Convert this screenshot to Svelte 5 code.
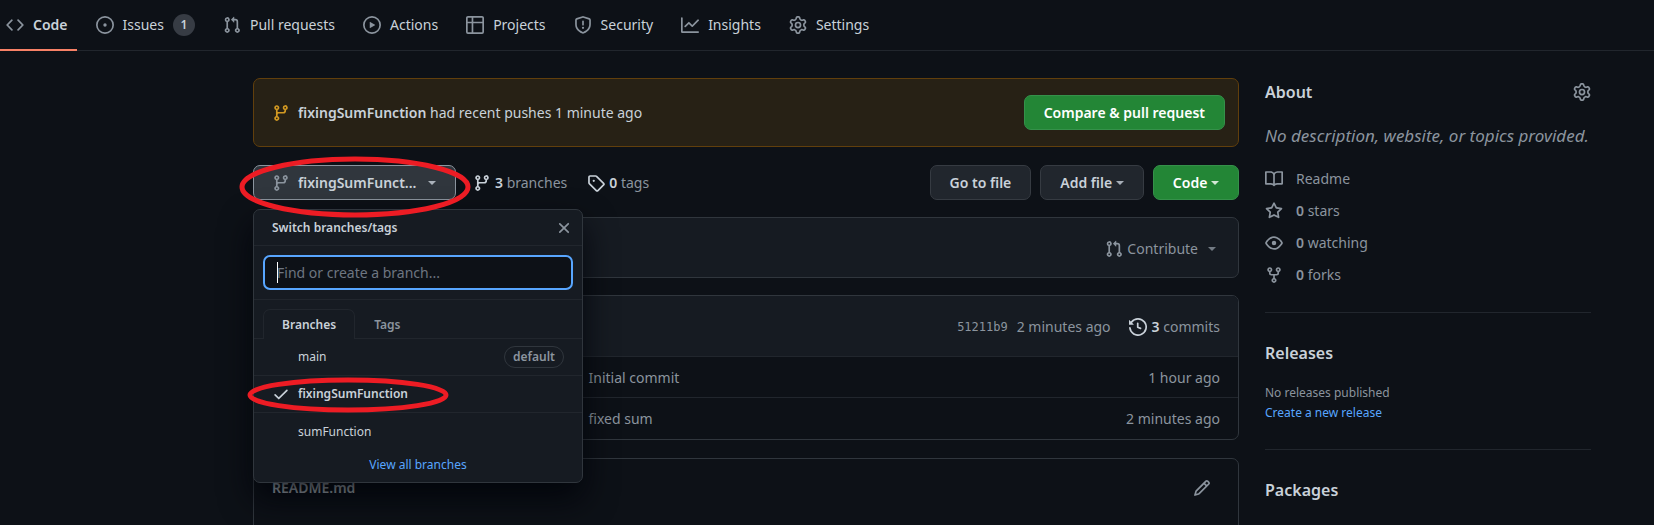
<script>
  const icons = {
    code: 'M4.72 3.22a.75.75 0 011.06 1.06L2.06 8l3.72 3.72a.75.75 0 11-1.06 1.06L.47 8.53a.75.75 0 010-1.06l4.25-4.25zm6.56 0a.75.75 0 10-1.06 1.06L13.94 8l-3.72 3.72a.75.75 0 101.06 1.06l4.25-4.25a.75.75 0 000-1.06l-4.25-4.25z',
    issue: 'M8 9.5a1.5 1.5 0 100-3 1.5 1.5 0 000 3zM8 0a8 8 0 100 16A8 8 0 008 0zM1.5 8a6.5 6.5 0 1113 0 6.5 6.5 0 01-13 0z',
    pull: 'M7.177 3.073L9.573.677A.25.25 0 0110 .854v4.792a.25.25 0 01-.427.177L7.177 3.427a.25.25 0 010-.354zM3.75 2.5a.75.75 0 100 1.5.75.75 0 000-1.5zm-2.25.75a2.25 2.25 0 113 2.122v5.256a2.251 2.251 0 11-1.5 0V5.372A2.25 2.25 0 011.5 3.25zM11 2.5h-1V4h1a1 1 0 011 1v5.628a2.251 2.251 0 101.5 0V5A2.5 2.5 0 0011 2.5zm1 10.25a.75.75 0 111.5 0 .75.75 0 01-1.5 0zM3.75 12a.75.75 0 100 1.5.75.75 0 000-1.5z',
    play: 'M1.5 8a6.5 6.5 0 1113 0 6.5 6.5 0 01-13 0zM8 0a8 8 0 100 16A8 8 0 008 0zM6.379 5.227A.25.25 0 006 5.442v5.117a.25.25 0 00.379.214l4.264-2.559a.25.25 0 000-.428L6.379 5.227z',
    table: 'M0 1.75C0 .784.784 0 1.75 0h12.5C15.216 0 16 .784 16 1.75v12.5A1.75 1.75 0 0114.25 16H1.75A1.75 1.75 0 010 14.25V1.75zM1.5 6.5v7.75c0 .138.112.25.25.25H5v-8H1.5zM5 5H1.5V1.75a.25.25 0 01.25-.25H5V5zm1.5 1.5v8h7.75a.25.25 0 00.25-.25V6.5h-8zm8-1.5h-8V1.5h7.75a.25.25 0 01.25.25V5z',
    shield: 'M7.467.133a1.75 1.75 0 011.066 0l5.25 1.68A1.75 1.75 0 0115 3.48V7c0 1.566-.32 3.182-1.303 4.682-.983 1.498-2.585 2.813-5.032 3.855a1.7 1.7 0 01-1.33 0c-2.447-1.042-4.049-2.357-5.032-3.855C1.32 10.182 1 8.566 1 7V3.48a1.75 1.75 0 011.217-1.667l5.25-1.68zm.61 1.429a.25.25 0 00-.153 0l-5.25 1.68a.25.25 0 00-.174.238V7c0 1.358.275 2.666 1.057 3.86.784 1.194 2.121 2.34 4.366 3.297a.2.2 0 00.154 0c2.245-.956 3.582-2.104 4.366-3.298C13.225 9.666 13.5 8.36 13.5 7V3.48a.25.25 0 00-.174-.237l-5.25-1.68zM8.75 4.75a.75.75 0 00-1.5 0v3a.75.75 0 001.5 0v-3zM9 10.5a1 1 0 11-2 0 1 1 0 012 0z',
    graph: 'M1.5 1.75a.75.75 0 00-1.5 0v12.5c0 .414.336.75.75.75h14.5a.75.75 0 000-1.5H1.5V1.75zm14.28 2.53a.75.75 0 00-1.06-1.06L10 7.94 7.53 5.47a.75.75 0 00-1.06 0L3.22 8.72a.75.75 0 001.06 1.06L7 7.06l2.47 2.47a.75.75 0 001.06 0l5.25-5.25z',
    gear: 'M7.429 1.525a6.593 6.593 0 011.142 0c.036.003.108.036.137.146l.289 1.105c.147.56.55.967.997 1.189.174.086.341.183.501.29.417.278.97.423 1.53.27l1.102-.303c.11-.03.175.016.195.046.219.31.41.641.573.989.014.031.022.11-.059.19l-.815.806c-.411.406-.562.957-.53 1.456a4.588 4.588 0 010 .582c-.032.499.119 1.05.53 1.456l.815.806c.08.08.073.159.059.19a6.494 6.494 0 01-.573.99c-.02.029-.086.074-.195.045l-1.103-.303c-.559-.153-1.112-.008-1.529.27-.16.107-.327.204-.5.29-.449.222-.851.628-.998 1.189l-.289 1.105c-.029.11-.101.143-.137.146a6.613 6.613 0 01-1.142 0c-.036-.003-.108-.037-.137-.146l-.289-1.105c-.147-.56-.55-.967-.997-1.189a4.502 4.502 0 01-.501-.29c-.417-.278-.97-.423-1.53-.27l-1.102.303c-.11.03-.175-.016-.195-.046a6.492 6.492 0 01-.573-.989c-.014-.031-.022-.11.059-.19l.815-.806c.411-.406.562-.957.53-1.456a4.587 4.587 0 010-.582c.032-.499-.119-1.05-.53-1.456l-.815-.806c-.08-.08-.073-.159-.059-.19a6.44 6.44 0 01.573-.99c.02-.029.086-.075.195-.045l1.103.303c.559.153 1.112.008 1.529-.27.16-.107.327-.204.5-.29.449-.222.851-.628.998-1.189l.289-1.105c.029-.11.101-.143.137-.146zM8 0c-.236 0-.47.01-.701.03-.743.065-1.29.615-1.458 1.261l-.29 1.106c-.017.066-.078.158-.211.224a5.994 5.994 0 00-.668.386c-.123.082-.233.09-.3.071L3.27 2.776c-.644-.177-1.392.02-1.82.63a7.977 7.977 0 00-.704 1.217c-.315.675-.111 1.422.363 1.891l.815.806c.05.048.098.147.088.294a6.084 6.084 0 000 .772c.01.147-.038.246-.088.294l-.815.806c-.474.469-.678 1.216-.363 1.891.2.428.436.835.704 1.218.428.609 1.176.806 1.82.63l1.103-.303c.066-.019.176-.011.299.071.213.143.436.272.668.386.133.066.194.158.212.224l.289 1.106c.169.646.715 1.196 1.458 1.26a8.094 8.094 0 001.402 0c.743-.064 1.29-.614 1.458-1.26l.29-1.106c.017-.066.078-.158.211-.224a5.98 5.98 0 00.668-.386c.123-.082.233-.09.3-.071l1.102.302c.644.177 1.392-.02 1.82-.63.268-.382.505-.789.704-1.217.315-.675.111-1.422-.364-1.891l-.814-.806c-.05-.048-.098-.147-.088-.294a6.1 6.1 0 000-.772c-.01-.147.039-.246.088-.294l.814-.806c.475-.469.679-1.216.364-1.891a7.992 7.992 0 00-.704-1.218c-.428-.609-1.176-.806-1.82-.63l-1.103.303c-.066.019-.176.011-.299-.071a5.991 5.991 0 00-.668-.386c-.133-.066-.194-.158-.212-.224L10.16 1.29C9.99.645 9.444.095 8.701.031A8.094 8.094 0 008 0zm1.5 8a1.5 1.5 0 11-3 0 1.5 1.5 0 013 0zM11 8a3 3 0 11-6 0 3 3 0 016 0z',
    branch: 'M11.75 2.5a.75.75 0 100 1.5.75.75 0 000-1.5zm-2.25.75a2.25 2.25 0 113 2.122V6A2.5 2.5 0 0110 8.5H6a1 1 0 00-1 1v1.128a2.251 2.251 0 11-1.5 0V5.372a2.25 2.25 0 111.5 0v1.836A2.492 2.492 0 016 7h4a1 1 0 001-1v-.628A2.25 2.25 0 019.5 3.25zM4.25 12a.75.75 0 100 1.5.75.75 0 000-1.5zM3.5 3.25a.75.75 0 111.5 0 .75.75 0 01-1.5 0z',
    tag: 'M2.5 7.775V2.75a.25.25 0 01.25-.25h5.025a.25.25 0 01.177.073l6.25 6.25a.25.25 0 010 .354l-5.025 5.025a.25.25 0 01-.354 0l-6.25-6.25a.25.25 0 01-.073-.177zm-1.5 0V2.75C1 1.784 1.784 1 2.75 1h5.025c.464 0 .91.184 1.238.513l6.25 6.25a1.75 1.75 0 010 2.474l-5.026 5.026a1.75 1.75 0 01-2.474 0l-6.25-6.25A1.75 1.75 0 011 7.775zM6 5a1 1 0 100 2 1 1 0 000-2z',
    history: 'M1.643 3.143L.427 1.927A.25.25 0 000 2.104V5.75c0 .138.112.25.25.25h3.646a.25.25 0 00.177-.427L2.715 4.215a6.5 6.5 0 11-1.18 4.458.75.75 0 10-1.493.154 8.001 8.001 0 101.6-5.684zM7.75 4a.75.75 0 01.75.75v2.992l2.028.812a.75.75 0 01-.557 1.392l-2.5-1A.75.75 0 017 8.25v-3.5A.75.75 0 017.75 4z',
    pencil: 'M11.013 1.427a1.75 1.75 0 012.474 0l1.086 1.086a1.75 1.75 0 010 2.474l-8.61 8.61c-.21.21-.47.364-.756.445l-3.251.93a.75.75 0 01-.927-.928l.929-3.25a1.75 1.75 0 01.445-.758l8.61-8.61zm1.414 1.06a.25.25 0 00-.354 0L10.811 3.75l1.439 1.44 1.263-1.263a.25.25 0 000-.354l-1.086-1.086zM11.189 6.25L9.75 4.81l-6.286 6.287a.25.25 0 00-.064.108l-.558 1.953 1.953-.558a.249.249 0 00.108-.064l6.286-6.286z',
    close: 'M3.72 3.72a.75.75 0 011.06 0L8 6.94l3.22-3.22a.75.75 0 111.06 1.06L9.06 8l3.22 3.22a.75.75 0 11-1.06 1.06L8 9.06l-3.22 3.22a.75.75 0 01-1.06-1.06L6.94 8 3.72 4.78a.75.75 0 010-1.06z',
    check: 'M13.78 4.22a.75.75 0 010 1.06l-7.25 7.25a.75.75 0 01-1.06 0L2.22 9.28a.75.75 0 011.06-1.06L6 10.94l6.72-6.72a.75.75 0 011.06 0z',
    book: 'M0 1.75A.75.75 0 01.75 1h4.253c1.227 0 2.317.59 3 1.501A3.744 3.744 0 0111.006 1h4.245a.75.75 0 01.75.75v10.5a.75.75 0 01-.75.75h-4.507a2.25 2.25 0 00-1.591.659l-.622.621a.75.75 0 01-1.06 0l-.622-.621A2.25 2.25 0 005.258 13H.75a.75.75 0 01-.75-.75V1.75zm8.755 3a2.25 2.25 0 012.25-2.25H14.5v9h-3.757c-.71 0-1.4.201-1.992.572l.004-7.322zm-1.504 7.324l.004-5.073-.002-2.253A2.25 2.25 0 005.003 2.5H1.5v9h3.757a3.75 3.75 0 011.994.574z',
    star: 'M8 .25a.75.75 0 01.673.418l1.882 3.815 4.21.612a.75.75 0 01.416 1.279l-3.046 2.97.719 4.192a.75.75 0 01-1.088.791L8 12.347l-3.766 1.98a.75.75 0 01-1.088-.79l.72-4.194L.818 6.374a.75.75 0 01.416-1.28l4.21-.611L7.327.668A.75.75 0 018 .25zm0 2.445L6.615 5.5a.75.75 0 01-.564.41l-3.097.45 2.24 2.184a.75.75 0 01.216.664l-.528 3.084 2.769-1.456a.75.75 0 01.698 0l2.77 1.456-.53-3.084a.75.75 0 01.216-.664l2.24-2.183-3.096-.45a.75.75 0 01-.564-.41L8 2.694v.001z',
    eye: 'M1.679 7.932c.412-.621 1.242-1.75 2.366-2.717C5.175 4.242 6.527 3.5 8 3.5c1.473 0 2.824.742 3.955 1.715 1.124.967 1.954 2.096 2.366 2.717a.119.119 0 010 .136c-.412.621-1.242 1.75-2.366 2.717C10.825 11.758 9.473 12.5 8 12.5c-1.473 0-2.824-.742-3.955-1.715C2.92 9.818 2.09 8.69 1.679 8.068a.119.119 0 010-.136zM8 2c-1.981 0-3.67.992-4.933 2.078C1.797 5.169.88 6.423.43 7.1a1.619 1.619 0 000 1.798c.45.678 1.367 1.932 2.637 3.024C4.329 13.008 6.019 14 8 14c1.981 0 3.67-.992 4.933-2.078 1.27-1.091 2.187-2.345 2.637-3.023a1.619 1.619 0 000-1.798c-.45-.678-1.367-1.932-2.637-3.023C11.671 2.992 9.981 2 8 2zm0 8a2 2 0 100-4 2 2 0 000 4z',
    fork: 'M5 3.25a.75.75 0 11-1.5 0 .75.75 0 011.5 0zm0 2.122a2.25 2.25 0 10-1.5 0v.878A2.25 2.25 0 005.75 8.5h1.5v2.128a2.251 2.251 0 101.5 0V8.5h1.5a2.25 2.25 0 002.25-2.25v-.878a2.25 2.25 0 10-1.5 0v.878a.75.75 0 01-.75.75h-4.5A.75.75 0 015 6.25v-.878zm3.75 7.378a.75.75 0 11-1.5 0 .75.75 0 011.5 0zm3-8.75a.75.75 0 100-1.5.75.75 0 000 1.5z'
  };

  const tabs = [
    { label: 'Code', icon: 'code', active: true },
    { label: 'Issues', icon: 'issue', count: 1 },
    { label: 'Pull requests', icon: 'pull' },
    { label: 'Actions', icon: 'play' },
    { label: 'Projects', icon: 'table' },
    { label: 'Security', icon: 'shield' },
    { label: 'Insights', icon: 'graph' },
    { label: 'Settings', icon: 'gear' }
  ];

  const branches = [
    { name: 'main', isDefault: true },
    { name: 'fixingSumFunction' },
    { name: 'sumFunction' }
  ];

  const files = [
    { message: 'Initial commit', age: '1 hour ago' },
    { message: 'fixed sum', age: '2 minutes ago' }
  ];

  const stats = [
    { icon: 'star', count: 0, label: 'stars' },
    { icon: 'eye', count: 0, label: 'watching' },
    { icon: 'fork', count: 0, label: 'forks' }
  ];

  let current = $state('fixingSumFunction');
  let query = $state('');
</script>

{#snippet icon(name)}
  <svg class="icon" viewBox="0 0 16 16" width="18" height="18" aria-hidden="true">
    <path fill-rule="evenodd" d={icons[name]} />
  </svg>
{/snippet}

<nav class="tabs">
  {#each tabs as tab}
    <a href="#{tab.icon}" class="tab" class:active={tab.active}>
      {@render icon(tab.icon)}
      <span>{tab.label}</span>
      {#if tab.count}<span class="counter">{tab.count}</span>{/if}
    </a>
  {/each}
</nav>

<div class="layout">
  <main>
    <div class="flash">
      {@render icon('branch')}
      <p><strong>fixingSumFunction</strong> had recent pushes 1 minute ago</p>
      <button class="btn primary">Compare &amp; pull request</button>
    </div>

    <div class="toolbar">
      <div class="picker">
        <button class="btn branch-btn">
          {@render icon('branch')}
          <span>fixingSumFunct...</span>
          <i class="caret"></i>
        </button>

        <div class="menu">
          <header>
            <strong>Switch branches/tags</strong>
            <button class="plain" aria-label="Close">{@render icon('close')}</button>
          </header>
          <div class="filter">
            <input type="text" aria-label="Find or create a branch" placeholder="Find or create a branch..." bind:value={query} />
          </div>
          <div class="menu-tabs">
            <button class="menu-tab selected">Branches</button>
            <button class="menu-tab">Tags</button>
          </div>
          {#each branches as b}
            <button class="item" class:current={b.name === current} onclick={() => (current = b.name)}>
              <span class="mark">{#if b.name === current}{@render icon('check')}{/if}</span>
              <span>{b.name}</span>
              {#if b.isDefault}<span class="pill">default</span>{/if}
              {#if b.name === current}
                <svg class="ring ring-item" viewBox="0 0 202 36" aria-hidden="true"><ellipse cx="101" cy="18" rx="98" ry="15" /></svg>
              {/if}
            </button>
          {/each}
          <a class="all" href="#branches">View all branches</a>
        </div>
        <svg class="ring ring-picker" viewBox="0 0 232 60" aria-hidden="true"><ellipse cx="116" cy="30" rx="113" ry="28" /></svg>
      </div>

      <a class="meta" href="#branches">{@render icon('branch')}<span><b>3</b> branches</span></a>
      <a class="meta tags" href="#tags">{@render icon('tag')}<span><b>0</b> tags</span></a>

      <div class="actions">
        <button class="btn">Go to file</button>
        <button class="btn">Add file <i class="caret"></i></button>
        <button class="btn primary">Code <i class="caret"></i></button>
      </div>
    </div>

    <section class="box contribute">
      <button class="plain contribute-btn">
        {@render icon('pull')}<span>Contribute</span><i class="caret"></i>
      </button>
    </section>

    <section class="box files">
      <div class="commit">
        <a class="sha" href="#commit">51211b9</a>
        <span>2 minutes ago</span>
        <a class="history" href="#commits">{@render icon('history')}<span><b>3</b> commits</span></a>
      </div>
      <table>
        <tbody>
          {#each files as f}
            <tr>
              <td class="name"></td>
              <td>{f.message}</td>
              <td class="age">{f.age}</td>
            </tr>
          {/each}
        </tbody>
      </table>
    </section>

    <section class="box readme">
      <h2>README.md</h2>
      <button class="plain" aria-label="Edit">{@render icon('pencil')}</button>
    </section>
  </main>

  <aside>
    <section>
      <div class="about-head">
        <h2>About</h2>
        <button class="plain" aria-label="Edit details">{@render icon('gear')}</button>
      </div>
      <p class="description">No description, website, or topics provided.</p>
      <ul>
        <li>{@render icon('book')}<a href="#readme">Readme</a></li>
        {#each stats as s}
          <li>{@render icon(s.icon)}<a href="#{s.label}"><b>{s.count}</b> {s.label}</a></li>
        {/each}
      </ul>
    </section>
    <section>
      <h2>Releases</h2>
      <p class="small">No releases published</p>
      <a class="small link" href="#new">Create a new release</a>
    </section>
    <section>
      <h2>Packages</h2>
    </section>
  </aside>
</div>

<style>
  :global(body) {
    background: #0d1117;
    color: #c9d1d9;
    font: 14px/22px "Noto Sans", "Open Sans", sans-serif;
    overflow: hidden;
  }
  :global(*) { box-sizing: border-box; }
  a { color: inherit; text-decoration: none; }
  button, input { font: inherit; color: inherit; margin: 0; }
  button { cursor: pointer; white-space: nowrap; }
  h2, p, ul { margin: 0; padding: 0; }
  b, strong { font-weight: 600; }
  .icon { flex: none; display: block; fill: #8b949e; }
  .plain { background: none; border: 0; padding: 0; }
  .caret {
    display: inline-block;
    border: 4px solid transparent;
    border-top-color: currentColor;
    border-bottom: 0;
    opacity: 0.8;
  }

  .tabs { display: flex; gap: 10px; height: 51px; border-bottom: 1px solid #21262d; }
  .tab {
    display: flex;
    align-items: center;
    gap: 9px;
    height: 51px;
    padding: 1px 9px 0;
    white-space: nowrap;
    border-bottom: 2px solid transparent;
  }
  .tab.active { padding-left: 6px; border-color: #f78166; font-weight: 600; }
  .counter {
    min-width: 22px;
    border-radius: 11px;
    background: #373c44;
    font-size: 12px;
    font-weight: 600;
    text-align: center;
  }

  .layout {
    display: grid;
    grid-template-columns: minmax(0, 1fr) 326px;
    gap: 26px;
    padding: 27px 63px 0 253px;
  }

  .btn {
    height: 35px;
    padding: 0 19px;
    border: 1px solid #363b42;
    border-radius: 7px;
    background: #21262d;
    font-weight: 600;
  }
  .btn .caret { vertical-align: 3px; }
  .primary { background: #238636; border-color: #35914a; color: #fff; }

  .flash {
    display: flex;
    align-items: center;
    gap: 8px;
    height: 69px;
    padding: 0 13px 0 18px;
    border: 1px solid #613f0c;
    border-radius: 7px;
    background: #272115;
  }
  .flash .icon { fill: #d29922; }
  .flash .btn { margin-left: auto; }

  .toolbar { display: flex; align-items: center; margin-top: 18px; }
  .picker { position: relative; }
  .branch-btn {
    display: flex;
    align-items: center;
    gap: 8px;
    width: 203px;
    padding: 0 18px;
    background: #30363d;
    border-color: #8b949e;
  }
  .branch-btn .caret { margin-left: 4px; }
  .meta { display: flex; align-items: center; gap: 4px; margin-left: 17px; color: #8b949e; }
  .meta.tags { margin-left: 20px; }
  .meta .icon, .meta b, .history .icon, .history b { fill: #c9d1d9; color: #c9d1d9; }
  .actions { display: flex; gap: 9px; margin-left: auto; }

  .menu {
    position: absolute;
    z-index: 2;
    top: 44px;
    left: 0;
    width: 330px;
    border: 1px solid #30363d;
    border-radius: 7px;
    background: #161b22;
    box-shadow: 0 16px 32px rgba(1, 4, 9, 0.85);
    font-size: 12px;
  }
  .menu header {
    display: flex;
    align-items: center;
    justify-content: space-between;
    height: 36px;
    padding: 0 9px 0 18px;
    border-bottom: 1px solid #21262d;
  }
  .filter { position: relative; padding: 9px; border-bottom: 1px solid #21262d; }
  .filter input {
    display: block;
    width: 100%;
    height: 35px;
    padding: 0 12px;
    border: 2px solid #58a6ff;
    border-radius: 7px;
    outline: 0;
    background: #0d1117;
    font-size: 14px;
    caret-color: #c9d1d9;
  }
  .filter input::placeholder { color: #6e7681; opacity: 1; }
  .filter::after {
    content: "";
    position: absolute;
    left: 23px;
    top: 16px;
    width: 1px;
    height: 21px;
    background: #fff;
  }
  .menu-tabs { display: flex; height: 39px; padding: 9px 9px 0; border-bottom: 1px solid #21262d; }
  .menu-tab {
    height: 30px;
    padding: 0 18px;
    border: 1px solid transparent;
    border-bottom: 0;
    border-radius: 7px 7px 0 0;
    background: none;
    color: #8b949e;
    font-weight: 600;
  }
  .menu-tab.selected { border-color: #21262d; background: #161b22; color: #c9d1d9; }
  .item {
    position: relative;
    display: flex;
    align-items: center;
    gap: 8px;
    width: 100%;
    height: 37px;
    padding: 0 18px;
    border: 0;
    border-bottom: 1px solid #21262d;
    background: none;
    text-align: left;
  }
  .item:nth-last-child(2) { border-bottom: 0; }
  .item.current { font-weight: 600; }
  .item .icon { fill: #c9d1d9; }
  .mark { width: 18px; }
  .pill {
    margin-left: auto;
    padding: 0 8px;
    line-height: 20px;
    border: 1px solid #30363d;
    border-radius: 11px;
    color: #8b949e;
    font-weight: 600;
  }
  .all { display: block; padding: 4px 0 6px; color: #58a6ff; text-align: center; }

  .ring { position: absolute; z-index: 3; overflow: visible; pointer-events: none; fill: none; stroke: #ed1c24; stroke-width: 5; }
  .ring-picker { left: -14px; top: -8px; width: 232px; height: 60px; }
  .ring-item { left: -7px; top: 1px; width: 202px; height: 36px; }

  .box { border: 1px solid #30363d; border-radius: 7px; }
  .contribute {
    display: flex;
    align-items: center;
    justify-content: flex-end;
    height: 61px;
    margin-top: 17px;
    padding: 2px 22px 0;
    background: #161b22;
  }
  .contribute-btn { display: flex; align-items: center; gap: 4px; color: #8b949e; }
  .contribute-btn .caret { margin-left: 6px; }
  .files { margin-top: 17px; overflow: hidden; color: #8b949e; }
  .commit {
    display: flex;
    align-items: center;
    justify-content: flex-end;
    gap: 9px;
    height: 60px;
    padding: 2px 18px 0;
    background: #161b22;
  }
  .sha { font: 12px/22px "DejaVu Sans Mono", monospace; }
  .history { display: flex; align-items: center; gap: 5px; margin-left: 9px; }
  table { width: 100%; border-collapse: collapse; table-layout: fixed; }
  td { height: 41px; padding: 2px 0 0; border-top: 1px solid #21262d; }
  .name { width: 34%; }
  .age { padding-right: 18px; text-align: right; }
  .readme {
    display: flex;
    align-items: center;
    justify-content: space-between;
    height: 80px;
    margin-top: 18px;
    padding: 0 27px 20px 18px;
  }
  .readme h2 { font-size: 14px; font-weight: 600; }

  aside section + section { margin-top: 26px; padding-top: 26px; border-top: 1px solid #21262d; }
  .about-head { display: flex; align-items: center; justify-content: space-between; }
  aside h2 { font-size: 16px; line-height: 28px; font-weight: 600; }
  .description { margin: 16px 0 18px; color: #8b949e; font-size: 17px; line-height: 28px; font-style: italic; white-space: nowrap; }
  ul { list-style: none; color: #8b949e; }
  li { display: flex; align-items: center; gap: 13px; height: 22px; margin-top: 10px; }
  .small { display: block; font-size: 12px; line-height: 20px; color: #8b949e; }
  p.small { margin-top: 16px; }
  .link { color: #58a6ff; }
</style>
